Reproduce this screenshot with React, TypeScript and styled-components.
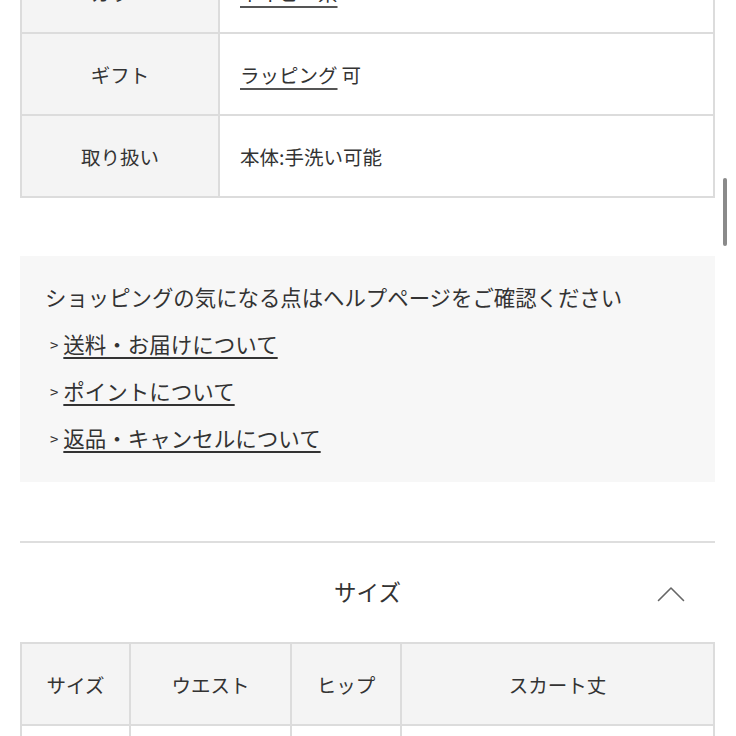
import styled, { createGlobalStyle } from "styled-components";

const GlobalStyle = createGlobalStyle`
  html, body {
    margin: 0;
    padding: 0;
    background: #ffffff;
    overflow: hidden;
  }
  body {
    font-family: "Noto Sans CJK JP", "Noto Sans", sans-serif;
    color: #333333;
  }
`;

const Page = styled.main`
  width: 695px;
  margin: -50px 0 0 20px;
  display: flex;
  flex-direction: column;
`;

const SpecTable = styled.div`
  display: grid;
  grid-template-columns: 198px 1fr;
  border-top: 2px solid #dcdcdc;
  border-left: 2px solid #dcdcdc;
`;

const Cell = styled.div<{ $head?: boolean; $center?: boolean }>`
  height: 80px;
  display: flex;
  align-items: center;
  justify-content: ${(p) => (p.$center ? "center" : "flex-start")};
  padding: 0 ${(p) => (p.$center ? "0" : "20px")};
  background: ${(p) => (p.$head ? "#f4f4f4" : "#ffffff")};
  border-right: 2px solid #dcdcdc;
  border-bottom: 2px solid #dcdcdc;
  font-size: 19.5px;
  color: #333333;
  white-space: nowrap;
`;

const TableLink = styled.a`
  color: #333333;
  text-decoration: underline;
  text-decoration-color: #555555;
  text-decoration-thickness: 1.5px;
  text-underline-offset: 5px;
  margin-right: 4px;
`;

const HelpBox = styled.section`
  margin-top: 58px;
  background: #f7f7f7;
  padding: 24px 25px 27px;
  display: flex;
  flex-direction: column;
  gap: 13px;
`;

const HelpTitle = styled.p`
  margin: 0;
  font-size: 21.4px;
  line-height: 34px;
  color: #333333;
`;

const HelpItem = styled.div`
  display: flex;
  align-items: center;
  gap: 5px;
  padding-left: 5px;
  line-height: 34px;
`;

const Caret = styled.span`
  font-size: 15px;
  color: #333333;
  transform: translateY(1px);
`;

const HelpLink = styled.a`
  font-size: 21.5px;
  color: #333333;
  text-decoration: underline;
  text-decoration-color: #333333;
  text-decoration-thickness: 2px;
  text-underline-offset: 4px;
`;

const Divider = styled.hr`
  margin: 59px 0 0;
  border: none;
  border-top: 2px solid #dedede;
`;

const SectionHead = styled.div`
  height: 99px;
  display: flex;
  align-items: center;
  justify-content: center;
  position: relative;
`;

const SectionTitle = styled.h2`
  margin: 0;
  font-size: 22.5px;
  font-weight: 400;
  color: #333333;
  transform: translateY(-2px);
`;

const Toggle = styled.button`
  position: absolute;
  right: 30px;
  top: 43px;
  width: 28px;
  height: 16px;
  padding: 0;
  border: none;
  background: none;
  display: flex;
`;

const SizeTable = styled.div`
  display: grid;
  grid-template-columns: 109px 161px 110px 1fr;
  border-top: 2px solid #dcdcdc;
  border-left: 2px solid #dcdcdc;
`;

const ScrollThumb = styled.div`
  position: fixed;
  top: 178px;
  right: 9px;
  width: 4px;
  height: 68px;
  border-radius: 3px;
  background: #8a8a8a;
`;

const specs = [
  { label: "カラー", link: "ネイビー系", rest: "" },
  { label: "ギフト", link: "ラッピング", rest: "可" },
  { label: "取り扱い", link: "", rest: "本体:手洗い可能" },
];

const helpLinks = ["送料・お届けについて", "ポイントについて", "返品・キャンセルについて"];

const sizeHead = ["サイズ", "ウエスト", "ヒップ", "スカート丈"];
const sizeRow = ["S", "64", "90", "79"];

export default function App() {
  return (
    <>
      <GlobalStyle />
      <Page>
        <SpecTable>
          {specs.map((s) => (
            <>
              <Cell key={s.label + "-l"} $head $center>
                {s.label}
              </Cell>
              <Cell key={s.label + "-v"}>
                {s.link && <TableLink href="#">{s.link}</TableLink>}
                {s.rest}
              </Cell>
            </>
          ))}
        </SpecTable>

        <HelpBox>
          <HelpTitle>ショッピングの気になる点はヘルプページをご確認ください</HelpTitle>
          {helpLinks.map((t) => (
            <HelpItem key={t}>
              <Caret>&gt;</Caret>
              <HelpLink href="#">{t}</HelpLink>
            </HelpItem>
          ))}
        </HelpBox>

        <Divider />

        <SectionHead>
          <SectionTitle>サイズ</SectionTitle>
          <Toggle aria-label="閉じる">
            <svg width="28" height="16" viewBox="0 0 28 16" fill="none">
              <polyline
                points="1.5,14.5 14,2 26.5,14.5"
                stroke="#666666"
                strokeWidth="1.6"
                strokeLinecap="round"
                strokeLinejoin="round"
              />
            </svg>
          </Toggle>
        </SectionHead>

        <SizeTable>
          {sizeHead.map((h) => (
            <Cell key={h} $head $center>
              {h}
            </Cell>
          ))}
          {sizeRow.map((v, i) => (
            <Cell key={i + v} $center>
              {v}
            </Cell>
          ))}
        </SizeTable>
      </Page>
      <ScrollThumb />
    </>
  );
}
